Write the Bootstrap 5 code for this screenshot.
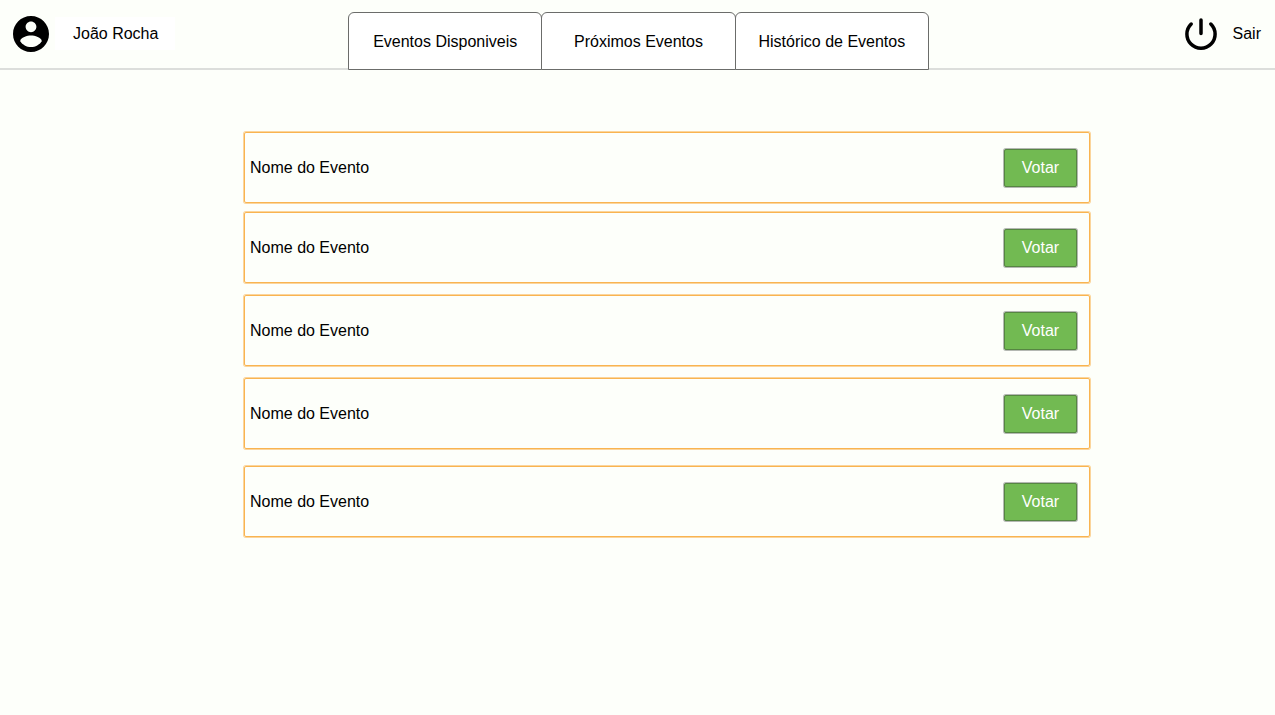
<!DOCTYPE html>
<html lang="pt-BR">
<head>
<meta charset="utf-8">
<meta name="viewport" content="width=device-width, initial-scale=1">
<title>Eventos</title>
<link href="https://cdn.jsdelivr.net/npm/bootstrap@5.3.0/dist/css/bootstrap.min.css" rel="stylesheet">
<style>
  body { background: #fdfffa; color: #000; font-family: "Liberation Sans", Arial, sans-serif; font-size: 16px; }
  .topbar { padding: 12px 12px 0 13px; border-bottom: 2px solid #dcdedb; }
  .side { flex: 1 1 0; height: 43px; }
  .user-name { background: #fff; width: 120px; padding: 5px 0 4px 18px; margin-left: 6px; }
  .logout { padding-right: 2px; }
  .tabs { width: 582px; padding-left: 1px; margin-bottom: -2px; }
  .tab-link { flex: 1 1 0; height: 58px; padding-top: 2px; background: #fff; border: 1px solid #6b6c6a; border-radius: 6px 6px 0 0; color: #000; }
  .tab-link + .tab-link { margin-left: -1px; }
  .events { padding: 62px 185px 40px 244px; }
  .event { height: 71px; padding: 0 12px 0 5px; border: 1px solid #f9b450; border-radius: 2px; box-shadow: 0 0 0 1px #fbd59c; }
  .gap-small { margin-top: 9px; }
  .gap-medium { margin-top: 12px; }
  .gap-wide { margin-top: 17px; }
  .btn-vote { width: 73px; height: 38px; padding: 1px 0 0; background: #72ba52; border: 1px solid #568642; border-radius: 2px; box-shadow: 0 0 0 1px #b4b8b2; color: #fff; }
  .btn-vote:hover { background: #64a846; color: #fff; }
</style>
</head>
<body>
<header class="topbar d-flex align-items-start">
  <div class="side d-flex align-items-center">
    <svg width="36" height="36" viewBox="2 2 20 20" aria-hidden="true"><path d="M12 2C6.48 2 2 6.48 2 12s4.480 10 10 10 10-4.480 10-10S17.520 2 12 2zm0 3c1.660 0 3 1.340 3 3s-1.340 3-3 3-3-1.340-3-3 1.340-3 3-3zm0 14.200c-2.500 0-4.710-1.280-6-3.220.03-1.990 4-3.080 6-3.080 1.990 0 5.970 1.090 6 3.080-1.290 1.940-3.500 3.220-6 3.220z"/></svg>
    <span class="user-name">João Rocha</span>
  </div>
  <nav class="tabs d-flex" aria-label="Eventos">
    <a class="tab-link d-flex align-items-center justify-content-center text-decoration-none" href="#disponiveis">Eventos Disponiveis</a>
    <a class="tab-link d-flex align-items-center justify-content-center text-decoration-none" href="#proximos">Próximos Eventos</a>
    <a class="tab-link d-flex align-items-center justify-content-center text-decoration-none" href="#historico">Histórico de Eventos</a>
  </nav>
  <div class="side d-flex align-items-center justify-content-end">
    <a class="logout d-flex align-items-center text-black text-decoration-none" href="#sair">
      <svg class="me-3" width="32" height="32" viewBox="0 0 32 32" fill="none" stroke="#000" stroke-width="3.500" stroke-linecap="round" aria-hidden="true"><path d="M16 2V15.500M6.200 6A14.100 14.100 0 1 0 25.800 6"/></svg>
      Sair
    </a>
  </div>
</header>
<main class="events" id="disponiveis">
  <div class="event d-flex align-items-center justify-content-between"><span>Nome do Evento</span><button type="button" class="btn btn-vote">Votar</button></div>
  <div class="event gap-small d-flex align-items-center justify-content-between"><span>Nome do Evento</span><button type="button" class="btn btn-vote">Votar</button></div>
  <div class="event gap-medium d-flex align-items-center justify-content-between"><span>Nome do Evento</span><button type="button" class="btn btn-vote">Votar</button></div>
  <div class="event gap-medium d-flex align-items-center justify-content-between"><span>Nome do Evento</span><button type="button" class="btn btn-vote">Votar</button></div>
  <div class="event gap-wide d-flex align-items-center justify-content-between"><span>Nome do Evento</span><button type="button" class="btn btn-vote">Votar</button></div>
</main>
<script src="https://cdn.jsdelivr.net/npm/bootstrap@5.3.0/dist/js/bootstrap.bundle.min.js"></script>
</body>
</html>
